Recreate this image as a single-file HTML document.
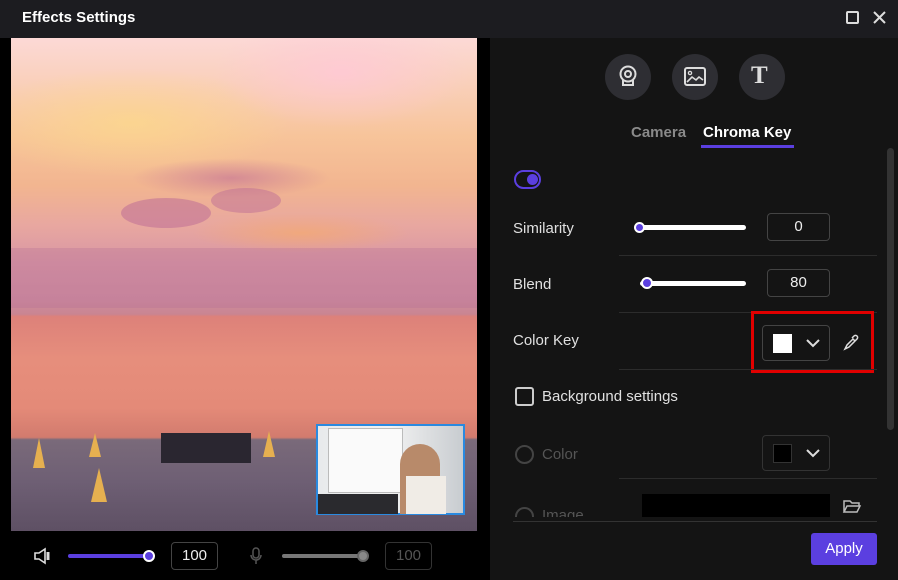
<!DOCTYPE html>
<html><head><style>
*{margin:0;padding:0;box-sizing:border-box}
body{width:898px;height:580px;background:#000;font-family:"Liberation Sans",sans-serif;position:relative;overflow:hidden;color:#ddd}
.a{position:absolute}
.title{left:0;top:0;width:898px;height:38px;background:#1c1c20}
.right{left:490px;top:38px;width:408px;height:542px;background:#141414}
.lbl{font-size:15px;color:#e0e0e0}
.box{border:1px solid #444;border-radius:4px;background:#141414;font-size:15px;color:#eee;text-align:center}
.sep{height:1px;background:#2c2c2c}
.circ{width:46px;height:46px;border-radius:50%;background:#2e2e33}
</style></head><body>
<div class="a title"></div>
<div class="a" style="left:22px;top:9px;font-size:15px;font-weight:bold;color:#fff">Effects Settings</div>
<div class="a" style="left:846px;top:11px;width:13px;height:13px;border:2px solid #ddd;border-radius:2px"></div>
<svg class="a" style="left:872px;top:10px" width="15" height="15"><path d="M2 2L13 13M13 2L2 13" stroke="#ddd" stroke-width="2"/></svg>

<div class="a" style="left:11px;top:38px;width:466px;height:493px;overflow:hidden;background:linear-gradient(180deg,#fcd9d6 0%,#f9cfb8 10%,#f7c49a 20%,#f2b590 30%,#e8a7a0 38%,#d895a4 46%,#cf8c9e 53%,#c98592 56%,#dd817a 56.5%,#e68e7c 65%,#e48a78 75%,#d27b6e 81%,#7a6a7a 81.5%,#6e5f74 90%,#5e5064 100%)">
 <div class="a" style="left:-40px;top:30px;width:320px;height:110px;border-radius:50%;background:radial-gradient(ellipse,rgba(252,216,140,.8),rgba(252,216,140,0) 70%)"></div>
 <div class="a" style="left:200px;top:-20px;width:260px;height:110px;border-radius:50%;background:radial-gradient(ellipse,rgba(255,200,215,.8),rgba(255,200,215,0) 70%)"></div>
 <div class="a" style="left:120px;top:120px;width:200px;height:40px;border-radius:50%;background:radial-gradient(ellipse,rgba(200,120,150,.7),rgba(200,120,150,0) 70%)"></div>
 <div class="a" style="left:110px;top:160px;width:90px;height:30px;border-radius:50%;background:rgba(190,110,150,.55)"></div>
 <div class="a" style="left:200px;top:150px;width:70px;height:25px;border-radius:50%;background:rgba(190,110,150,.5)"></div>
 <div class="a" style="left:180px;top:175px;width:220px;height:40px;border-radius:50%;background:radial-gradient(ellipse,rgba(245,170,110,.7),rgba(245,170,110,0) 70%)"></div>
 <div class="a" style="left:0;top:210px;width:466px;height:60px;background:rgba(180,110,150,.3)"></div>
 <div class="a" style="left:150px;top:395px;width:90px;height:30px;background:#2a2630"></div>
 <div class="a" style="left:22px;top:400px;width:12px;height:30px;background:#e6b050;clip-path:polygon(50% 0,100% 100%,0 100%)"></div>
 <div class="a" style="left:78px;top:395px;width:12px;height:24px;background:#e6b050;clip-path:polygon(50% 0,100% 100%,0 100%)"></div>
 <div class="a" style="left:80px;top:430px;width:16px;height:34px;background:#e6b050;clip-path:polygon(50% 0,100% 100%,0 100%)"></div>
 <div class="a" style="left:252px;top:393px;width:12px;height:26px;background:#e6b050;clip-path:polygon(50% 0,100% 100%,0 100%)"></div>
</div>
<div class="a" style="left:316px;top:424px;width:149px;height:91px;border:2px solid #2a8ae0;background:linear-gradient(90deg,#e8eaec 0%,#f2f2f2 50%,#c8ccd0 100%)">
 <div class="a" style="left:10px;top:2px;width:75px;height:65px;background:#fafafa;border:1px solid #bbb"></div>
 <div class="a" style="left:82px;top:18px;width:40px;height:70px;border-radius:20px 20px 0 0;background:#b88a6a"></div>
 <div class="a" style="left:88px;top:50px;width:40px;height:38px;background:#f0ece6"></div>
 <div class="a" style="left:0;top:68px;width:80px;height:20px;background:#2a2a2e"></div>
</div>

<svg class="a" style="left:33px;top:547px" width="20" height="18"><path d="M2 6h4l6-4v14l-6-4H2z" fill="none" stroke="#ddd" stroke-width="1.6"/><path d="M15 5v8" stroke="#ddd" stroke-width="3"/></svg>
<div class="a" style="left:68px;top:554px;width:82px;height:4px;background:#5b3fe0;border-radius:2px"></div>
<div class="a" style="left:143px;top:550px;width:12px;height:12px;border-radius:50%;background:#5b3fe0;border:2px solid #fff"></div>
<div class="a box" style="left:171px;top:542px;width:47px;height:28px;line-height:26px;background:#000">100</div>
<svg class="a" style="left:248px;top:546px" width="20" height="20"><rect x="5" y="2" width="6" height="10" rx="3" fill="none" stroke="#555" stroke-width="1.5"/><path d="M3 9a5 5 0 0010 0M8 14v4" stroke="#555" fill="none" stroke-width="1.5"/></svg>
<div class="a" style="left:282px;top:554px;width:82px;height:4px;background:#777;border-radius:2px"></div>
<div class="a" style="left:357px;top:550px;width:12px;height:12px;border-radius:50%;background:#888;border:2px solid #666"></div>
<div class="a box" style="left:385px;top:542px;width:47px;height:28px;line-height:26px;background:#000;color:#555;border-color:#333">100</div>

<div class="a right"></div>
<div class="a circ" style="left:605px;top:54px"></div>
<div class="a circ" style="left:672px;top:54px"></div>
<div class="a circ" style="left:739px;top:54px"></div>
<svg class="a" style="left:617px;top:65px" width="22" height="24"><circle cx="11" cy="9" r="7.5" fill="none" stroke="#ddd" stroke-width="2"/><circle cx="11" cy="9" r="3" fill="none" stroke="#ddd" stroke-width="2"/><path d="M6 15v5h10v-5" fill="none" stroke="#ddd" stroke-width="2"/></svg>
<svg class="a" style="left:684px;top:67px" width="22" height="20"><rect x="1" y="1" width="20" height="17" rx="2" fill="none" stroke="#ddd" stroke-width="2"/><circle cx="6" cy="6" r="1.6" fill="none" stroke="#ddd" stroke-width="1.3"/><path d="M3 15l5-5 4 3 3-3 4 3" fill="none" stroke="#ddd" stroke-width="1.6"/></svg>
<div class="a" style="left:751px;top:62px;font-size:25px;font-family:'Liberation Serif',serif;font-weight:bold;color:#ddd">T</div>
<div class="a" style="left:631px;top:124px;font-size:15px;font-weight:bold;color:#8a8a8a">Camera</div>
<div class="a" style="left:703px;top:124px;font-size:15px;font-weight:bold;color:#fff">Chroma Key</div>
<div class="a" style="left:701px;top:145px;width:93px;height:3px;background:#5b3fe0"></div>
<div class="a" style="left:887px;top:148px;width:7px;height:282px;border-radius:4px;background:#333"></div>
<div class="a" style="left:514px;top:170px;width:27px;height:19px;border:2px solid #5b3fe0;border-radius:10px"></div>
<div class="a" style="left:527px;top:174px;width:11px;height:11px;border-radius:50%;background:#5b3fe0"></div>

<div class="a lbl" style="left:513px;top:220px">Similarity</div>
<div class="a" style="left:638px;top:225px;width:108px;height:5px;background:#fff;border-radius:3px"></div>
<div class="a" style="left:634px;top:222px;width:11px;height:11px;border-radius:50%;background:#5b3fe0;border:2px solid #fff"></div>
<div class="a box" style="left:767px;top:213px;width:63px;height:28px;line-height:26px">0</div>
<div class="a sep" style="left:619px;top:255px;width:258px"></div>
<div class="a lbl" style="left:513px;top:276px">Blend</div>
<div class="a" style="left:640px;top:281px;width:106px;height:5px;background:#fff;border-radius:3px"></div>
<div class="a" style="left:641px;top:277px;width:12px;height:12px;border-radius:50%;background:#5b3fe0;border:2px solid #fff"></div>
<div class="a box" style="left:767px;top:269px;width:63px;height:28px;line-height:26px">80</div>
<div class="a sep" style="left:619px;top:312px;width:258px"></div>
<div class="a lbl" style="left:513px;top:332px">Color Key</div>
<div class="a box" style="left:762px;top:325px;width:68px;height:36px"></div>
<div class="a" style="left:773px;top:334px;width:19px;height:19px;background:#fff"></div>
<svg class="a" style="left:805px;top:337px" width="16" height="12"><path d="M2 3l6 6 6-6" fill="none" stroke="#ddd" stroke-width="2"/></svg>
<svg class="a" style="left:842px;top:334px" width="18" height="18"><path d="M3 15l2-4 6-6 2 2-6 6zM10 4l2-2a2 2 0 013 3l-2 2" fill="none" stroke="#ddd" stroke-width="1.5"/></svg>
<div class="a" style="left:751px;top:311px;width:123px;height:62px;border:3px solid #e00000"></div>
<div class="a sep" style="left:619px;top:369px;width:258px"></div>
<div class="a" style="left:515px;top:387px;width:19px;height:19px;border:2px solid #ccc;border-radius:3px"></div>
<div class="a lbl" style="left:542px;top:388px">Background settings</div>
<div class="a" style="left:515px;top:445px;width:19px;height:19px;border:2px solid #444;border-radius:50%"></div>
<div class="a lbl" style="left:542px;top:446px;color:#555">Color</div>
<div class="a box" style="left:762px;top:435px;width:68px;height:36px;border-color:#333"></div>
<div class="a" style="left:773px;top:444px;width:19px;height:19px;background:#000;border:1px solid #333"></div>
<svg class="a" style="left:805px;top:447px" width="16" height="12"><path d="M2 3l6 6 6-6" fill="none" stroke="#ddd" stroke-width="2"/></svg>
<div class="a sep" style="left:619px;top:478px;width:258px"></div>
<div class="a" style="left:642px;top:494px;width:188px;height:23px;background:#000"></div>
<svg class="a" style="left:842px;top:498px" width="20" height="17"><path d="M2 14V3h6l2 2h7v3M2 14l3-6h13l-3 6z" fill="none" stroke="#bbb" stroke-width="1.5"/></svg>
<div class="a" style="left:513px;top:505px;width:300px;height:12px;overflow:hidden">
 <div class="a" style="left:2px;top:2px;width:19px;height:19px;border:2px solid #444;border-radius:50%"></div>
 <div class="a lbl" style="left:29px;top:2px;color:#555">Image</div>
</div>
<div class="a" style="left:513px;top:521px;width:364px;height:1px;background:#333"></div>
<div class="a" style="left:811px;top:533px;width:66px;height:32px;background:#5b3fe0;border-radius:3px;color:#fff;font-size:15px;text-align:center;line-height:32px">Apply</div>
</body></html>
